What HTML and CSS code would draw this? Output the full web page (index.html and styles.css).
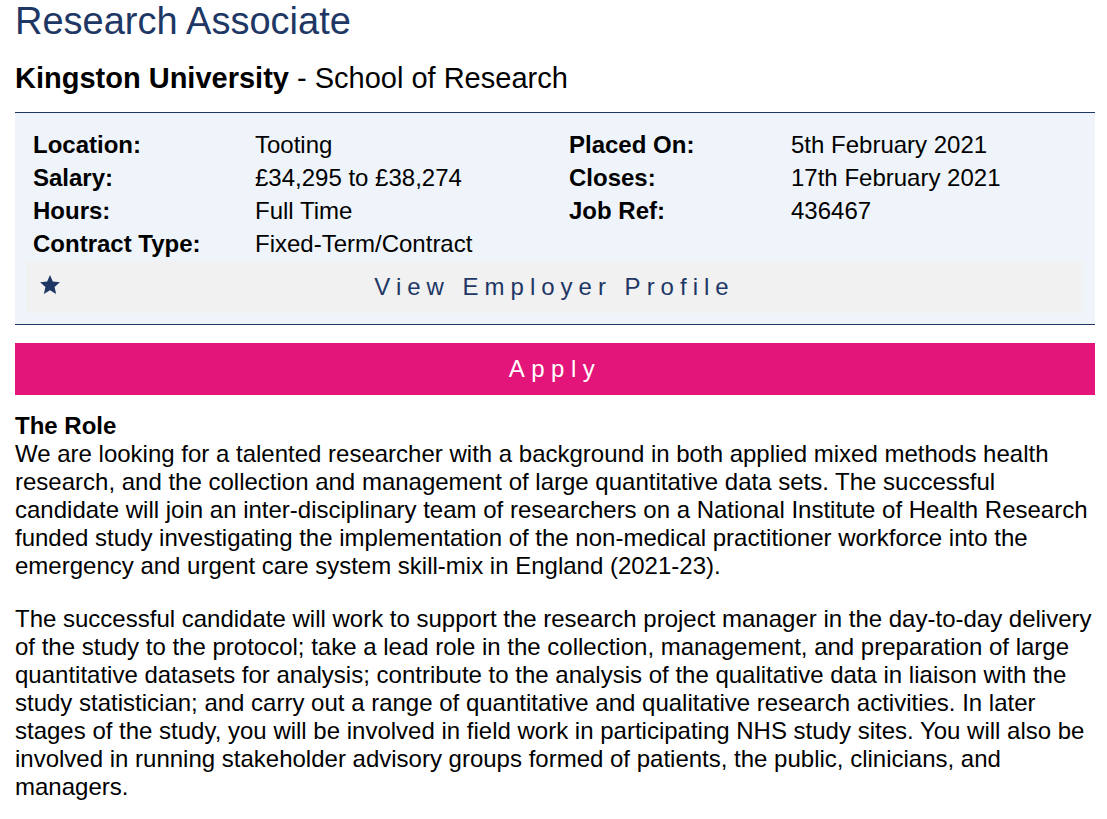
FILE: index.html
```html
<!DOCTYPE html>
<html lang="en">
<head>
<meta charset="utf-8">
<title>Research Associate - Kingston University</title>
<link rel="stylesheet" href="styles.css">
</head>
<body>
<div class="page">
  <h1 class="job-title">Research Associate</h1>
  <h2 class="employer"><b>Kingston University</b> - School of Research</h2>

  <div class="details">
    <div class="grid">
      <div class="label">Location:</div><div class="value">Tooting</div>
      <div class="label">Placed On:</div><div class="value">5th February 2021</div>
      <div class="label">Salary:</div><div class="value">£34,295 to £38,274</div>
      <div class="label">Closes:</div><div class="value">17th February 2021</div>
      <div class="label">Hours:</div><div class="value">Full Time</div>
      <div class="label">Job Ref:</div><div class="value">436467</div>
      <div class="label">Contract Type:</div><div class="value">Fixed-Term/Contract</div>
    </div>
    <div class="profile">
      <svg class="star" viewBox="0 0 24 24" width="22" height="22" aria-hidden="true"><path d="M12 1.2l3.1 7.1 7.7.7-5.8 5.1 1.7 7.6L12 17.8l-6.7 3.9 1.7-7.6L1.2 9l7.7-.7z" fill="#1e3765"/></svg>
      <span class="profile-text">View Employer Profile</span>
    </div>
  </div>

  <div class="apply">Apply</div>

  <div class="desc">
    <p><b>The Role</b><br>We are looking for a talented researcher with a background in both applied mixed methods health research, and the collection and management of large quantitative data sets. The successful candidate will join an inter-disciplinary team of researchers on a National Institute of Health Research funded study investigating the implementation of the non-medical practitioner workforce into the emergency and urgent care system skill-mix in England (2021-23).</p>
    <p>The successful candidate will work to support the research project manager in the day-to-day delivery<br>of the study to the protocol; take a lead role in the collection, management, and preparation of large quantitative datasets for analysis; contribute to the analysis of the qualitative data in liaison with the study statistician; and carry out a range of quantitative and qualitative research activities. In later stages of the study, you will be involved in field work in participating NHS study sites. You will also be involved in running stakeholder advisory groups formed of patients, the public, clinicians, and managers.</p>
  </div>
</div>
</body>
</html>
```

FILE: styles.css
```css
html, body {
  margin: 0;
  padding: 0;
  background: #ffffff;
}
body {
  font-family: "Liberation Sans", Arial, sans-serif;
  color: #000;
}
.page {
  padding: 0 12px 0 15px;
}
.job-title {
  margin: 0;
  font-size: 38px;
  line-height: 42px;
  font-weight: normal;
  color: #1e3765;
}
.employer {
  margin: 19px 0 0 0;
  font-size: 29px;
  line-height: 34px;
  font-weight: normal;
}
.details {
  margin-top: 17px;
  background: #eef4f9;
  border-top: 1px solid #1e3765;
  border-bottom: 1px solid #1e3765;
  padding: 15px 12px 11px 11px;
}
.grid {
  display: grid;
  grid-template-columns: 222px 314px 222px 1fr;
  padding-left: 7px;
  font-size: 24px;
  line-height: 33px;
}
.label {
  font-weight: bold;
}
.profile {
  position: relative;
  background: #f1f1f1;
  height: 52px;
  margin-top: 1px;
  display: flex;
  align-items: center;
  justify-content: center;
}
.star {
  position: absolute;
  left: 13px;
  top: 13px;
}
.profile-text {
  font-size: 24px;
  letter-spacing: 6px;
  color: #1e3765;
}
.apply {
  margin-top: 18px;
  height: 52px;
  background: #e3157b;
  color: #fff;
  font-size: 24px;
  letter-spacing: 6.5px;
  display: flex;
  align-items: center;
  justify-content: center;
}
.desc {
  margin-top: 17px;
  font-size: 24px;
  line-height: 28px;
}
.desc p {
  margin: 0 0 25px 0;
}
```
